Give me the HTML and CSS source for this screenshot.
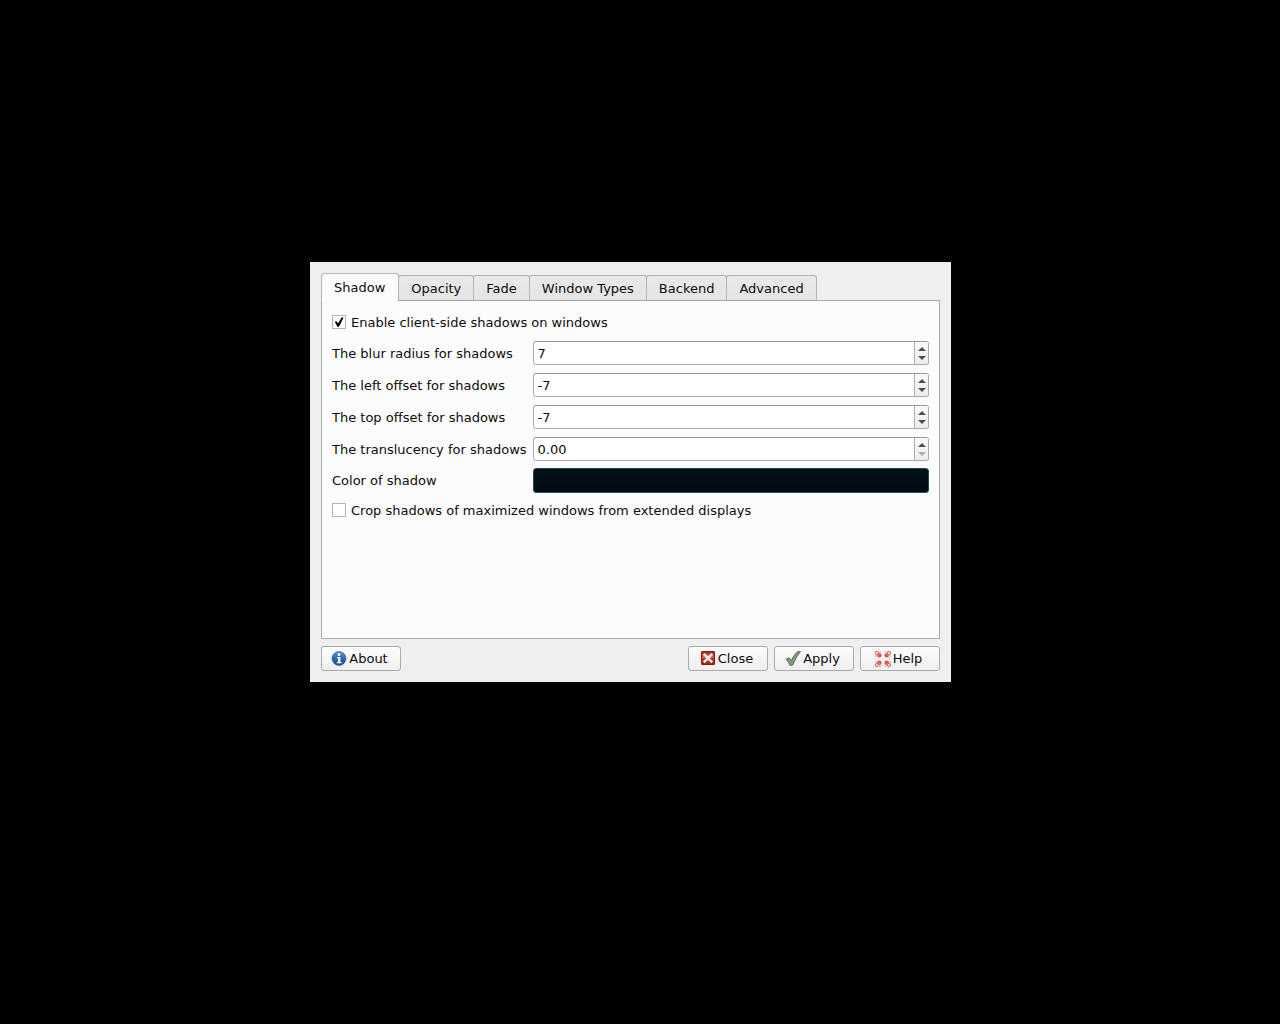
FILE: index.html
```html
<!DOCTYPE html>
<html lang="en">
<head>
<meta charset="utf-8">
<title>Compositor settings</title>
<link rel="stylesheet" href="styles.css">
</head>
<body>
<main class="dialog">
  <div class="tabs" role="tablist">
    <button class="tab tab-active" type="button" role="tab" aria-selected="true" aria-controls="panel" id="tab-shadow">Shadow</button>
    <button class="tab" type="button" role="tab" aria-selected="false">Opacity</button>
    <button class="tab" type="button" role="tab" aria-selected="false">Fade</button>
    <button class="tab" type="button" role="tab" aria-selected="false">Window Types</button>
    <button class="tab" type="button" role="tab" aria-selected="false">Backend</button>
    <button class="tab" type="button" role="tab" aria-selected="false">Advanced</button>
  </div>
  <form class="panel" id="panel" role="tabpanel" aria-labelledby="tab-shadow">
    <label class="check"><input class="box" type="checkbox" checked>Enable client-side shadows on windows</label>

    <label class="name" for="blur">The blur radius for shadows</label>
    <div class="spin">
      <input class="value" id="blur" type="number" value="7">
      <div class="steps">
        <button class="step" type="button" aria-label="Increase"><svg class="arrow" viewBox="0 0 8 4"><path d="M0 4L4 0L8 4Z"/></svg></button>
        <button class="step" type="button" aria-label="Decrease"><svg class="arrow" viewBox="0 0 8 4"><path d="M0 0L4 4L8 0Z"/></svg></button>
      </div>
    </div>

    <label class="name" for="left">The left offset for shadows</label>
    <div class="spin">
      <input class="value" id="left" type="number" value="-7">
      <div class="steps">
        <button class="step" type="button" aria-label="Increase"><svg class="arrow" viewBox="0 0 8 4"><path d="M0 4L4 0L8 4Z"/></svg></button>
        <button class="step" type="button" aria-label="Decrease"><svg class="arrow" viewBox="0 0 8 4"><path d="M0 0L4 4L8 0Z"/></svg></button>
      </div>
    </div>

    <label class="name" for="top">The top offset for shadows</label>
    <div class="spin">
      <input class="value" id="top" type="number" value="-7">
      <div class="steps">
        <button class="step" type="button" aria-label="Increase"><svg class="arrow" viewBox="0 0 8 4"><path d="M0 4L4 0L8 4Z"/></svg></button>
        <button class="step" type="button" aria-label="Decrease"><svg class="arrow" viewBox="0 0 8 4"><path d="M0 0L4 4L8 0Z"/></svg></button>
      </div>
    </div>

    <label class="name" for="translucency">The translucency for shadows</label>
    <div class="spin">
      <input class="value" id="translucency" type="number" value="0.00" min="0" step="0.01">
      <div class="steps">
        <button class="step" type="button" aria-label="Increase"><svg class="arrow" viewBox="0 0 8 4"><path d="M0 4L4 0L8 4Z"/></svg></button>
        <button class="step" type="button" aria-label="Decrease" disabled><svg class="arrow" viewBox="0 0 8 4"><path d="M0 0L4 4L8 0Z"/></svg></button>
      </div>
    </div>

    <label class="name name-color" for="color">Color of shadow</label>
    <button class="color" id="color" type="button"></button>

    <label class="check"><input class="box" type="checkbox">Crop shadows of maximized windows from extended displays</label>
  </form>
  <div class="actions">
    <button class="action" type="button">
      <svg class="icon" viewBox="0 0 16 16">
        <defs><linearGradient id="blue" x1="0" y1="0" x2="0" y2="1"><stop offset="0" stop-color="#5c93cf"/><stop offset="0.5" stop-color="#2a68b0"/><stop offset="1" stop-color="#1c4f92"/></linearGradient></defs>
        <circle cx="8" cy="7.5" r="7" fill="url(#blue)" stroke="#2c5c98" stroke-width="0.6"/>
        <circle cx="8" cy="3.7" r="1.4" fill="#fff"/>
        <path d="M6 6h3.4v5h1.2v1.3H5.8v-1.3H7V7.3H6Z" fill="#fff"/>
      </svg>About</button>
    <button class="action action-first" type="button">
      <svg class="icon" viewBox="0 0 16 16">
        <defs><linearGradient id="red" x1="0" y1="0" x2="0" y2="1"><stop offset="0" stop-color="#a8231c"/><stop offset="0.45" stop-color="#cd6a58"/><stop offset="0.55" stop-color="#c22f22"/><stop offset="1" stop-color="#b01a10"/></linearGradient></defs>
        <rect x="1.5" y="0.5" width="13" height="13" rx="0.5" fill="url(#red)" stroke="#8f1a15"/>
        <path d="M3.8 2.8L12.2 11.4M12.2 2.8L3.8 11.4" stroke="#f6eeec" stroke-width="2.6"/>
      </svg>Close</button>
    <button class="action" type="button">
      <svg class="icon" viewBox="0 0 16 16">
        <path d="M1 8.2L4 6.8L6.2 9.6Q9 3.6 12.4 0.8L15.4 0.6Q10.6 6.5 7.8 14L5.2 14.4Q3.6 11 1 8.2Z" fill="#869b7a" stroke="#566a4c" stroke-width="0.9" stroke-linejoin="round"/>
      </svg>Apply</button>
    <button class="action" type="button">
      <svg class="icon" viewBox="0 0 16 16">
        <defs>
          <g id="quarter">
            <circle cx="2" cy="2" r="1.5" fill="#fff" stroke="#c94a4a" stroke-width="0.9"/>
            <path d="M3.6 1Q5.2 0.3 6.4 1.2M1 3.6Q0.3 5.2 1.2 6.4" fill="none" stroke="#d98a8a" stroke-width="0.8"/>
            <path d="M1.9 4.6L4.6 1.9Q6.2 2.2 6.6 4L6 6L4 6.6Q2.2 6.2 1.9 4.6Z" fill="#dd4c4c"/>
            <path d="M3.2 4.6L4.6 3.2" stroke="#f3a9a7" stroke-width="0.8"/>
          </g>
        </defs>
        <use href="#quarter"/>
        <use href="#quarter" transform="translate(16 0) scale(-1 1)"/>
        <use href="#quarter" transform="translate(0 16) scale(1 -1)"/>
        <use href="#quarter" transform="translate(16 16) scale(-1 -1)"/>
      </svg>Help</button>
  </div>
</main>
</body>
</html>
```
FILE: styles.css
```css
* { box-sizing: border-box; }

body {
  margin: 0;
  padding: 262px 329px 20px 310px;
  background: #000;
  color: #0c0c0c;
  font-family: "DejaVu Sans", sans-serif;
  font-size: 13px;
  line-height: 16px;
}

button, input { font: inherit; color: inherit; }

.dialog {
  min-width: 560px;
  padding: 11px;
  background: #efefef;
}

/* Tab strip: each tab shares its side border with the next */
.tabs {
  position: relative;
  z-index: 1;
  display: flex;
  align-items: flex-end;
  margin-bottom: -1px;
}

.tab {
  height: 26px;
  margin: 0 0 0 -1px;
  padding: 2px 12px 0;
  border: 1px solid #b4b4b4;
  border-bottom-color: #a4a4a4;
  border-radius: 3px 3px 0 0;
  background: linear-gradient(#e9e9e9, #e5e5e5);
}

.tab-active {
  height: 28px;
  margin-left: 0;
  padding: 1px 13px 0 12px;
  border-bottom-color: #fcfcfc;
  background: #fcfcfc;
}

.panel {
  display: grid;
  grid-template-columns: auto 1fr;
  align-content: start;
  gap: 7px 6px;
  min-height: 339px;
  padding: 11px 10px;
  border: 1px solid #a9a9a9;
  background: #fcfcfc;
}

.check {
  grid-column: 1 / -1;
  display: flex;
  align-items: center;
  gap: 5px;
  height: 21px;
}

.box {
  appearance: none;
  display: grid;
  place-items: center;
  width: 14px;
  height: 14px;
  margin: 0 0 1px;
  border: 1px solid #b4b4b4;
  background: #fff;
}

.box:checked::before {
  content: "";
  width: 10px;
  height: 10px;
  background: #000;
  clip-path: polygon(8% 48%, 26% 42%, 40% 66%, 76% 4%, 96% 4%, 50% 98%, 34% 98%);
}

.name {
  align-self: center;
  padding-top: 2px;
}

.name-color { padding-top: 0; }

.spin {
  display: flex;
  align-self: end;
  height: 24px;
  margin-top: 1px;
  overflow: hidden;
  border: 1px solid #adadad;
  border-top-color: #999;
  border-radius: 3px;
  background: #fff;
}

.value {
  flex: 1;
  min-width: 0;
  padding: 2px 4px 0;
  border: 0;
  background: none;
  outline: 0;
  appearance: textfield;
}

.value::-webkit-inner-spin-button { appearance: none; }

.steps {
  display: flex;
  flex-direction: column;
  width: 14px;
  padding: 2px 0;
  border-left: 1px solid #adadad;
  background: linear-gradient(#fbfbfb, #ececec);
}

.step {
  flex: 1;
  display: grid;
  place-items: center;
  min-height: 0;
  padding: 0;
  border: 0;
  background: none;
}

.arrow {
  width: 8px;
  height: 4px;
  fill: #4f4f4f;
}

.step:disabled .arrow { fill: #b0b0b0; }

.color {
  height: 25px;
  border: 1px solid #1d4c63;
  border-radius: 3px;
  background: linear-gradient(#041218, #030b14);
}

.actions {
  display: flex;
  gap: 6px;
  padding-top: 7px;
}

.action {
  display: flex;
  align-items: center;
  justify-content: center;
  gap: 2px;
  width: 80px;
  height: 25px;
  padding: 0 3px 0 0;
  border: 1px solid #ababab;
  border-radius: 3px;
  background: linear-gradient(#fdfdfd, #eee);
}

.action-first { margin-left: auto; }

.icon {
  flex: none;
  width: 16px;
  height: 16px;
}
```
